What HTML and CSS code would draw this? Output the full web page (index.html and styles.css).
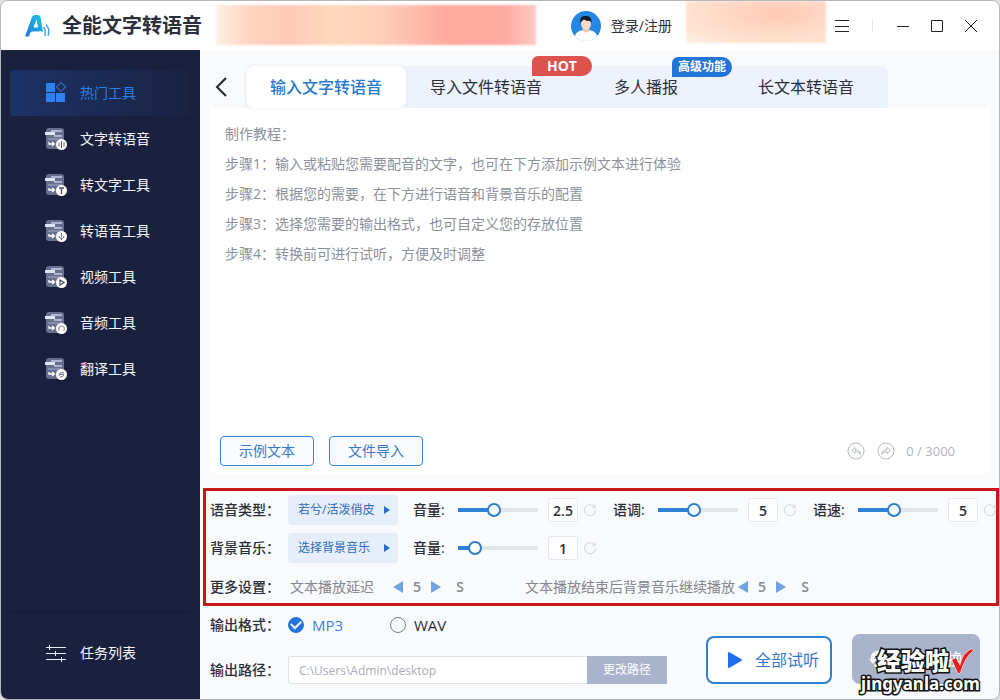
FILE: index.html
```html
<!DOCTYPE html>
<html lang="zh-CN">
<head>
<meta charset="utf-8">
<meta name="viewport" content="width=device-width, initial-scale=1">
<title>全能文字转语音</title>
<link rel="stylesheet" href="styles.css">
</head>
<body>
<svg class="defs" aria-hidden="true">
  <defs>
    <linearGradient id="logo-fill" x1="1" y1="0" x2="0" y2="1">
      <stop offset="0" stop-color="#22c6e8"/><stop offset="1" stop-color="#1d74d8"/>
    </linearGradient>
    <symbol id="tool" viewBox="0 0 24 24">
      <rect x="2" y="1" width="18" height="21" rx="3" fill="#686f8e"/>
      <path d="M7 4h11M10 9h8" stroke="#aeb5d2" stroke-width="2" fill="none"/>
      <path d="M1 6.500h10" stroke="#dfe4f6" stroke-width="3"/>
      <path d="M4 12h14" stroke="#9299b6" stroke-width="1.500"/>
      <path d="M5 15v2h5M8 15l2.500 2L8 19" stroke="#fff" stroke-width="1.300" fill="none"/>
      <circle cx="17.500" cy="17.500" r="5.500" fill="#fff"/>
    </symbol>
    <symbol id="reset" viewBox="0 0 14 14">
      <path d="M11.500 4A5.500 5.500 0 1 0 12.500 7M12 1.500v3H9.500" fill="none" stroke="#dcdee2" stroke-width="1.300"/>
    </symbol>
  </defs>
</svg>

<div class="window">
  <header class="titlebar">
    <svg class="logo" viewBox="0 0 28 24" aria-hidden="true">
      <path fill="url(#logo-fill)" fill-rule="evenodd" d="M0 22.500 7 3Q8 1 10 1H13Q15 1 15.500 3L18 18 15.500 17 13.500 17.500H7Q5 18 4 22.500ZM8.500 13.500H13L11.500 5.500Z"/>
      <path d="M18.500 13q3 4 1 9M21 10.500q4.500 5.500 2 11.500" fill="none" stroke="#3aa7e4" stroke-width="1.400"/>
    </svg>
    <h1 class="title">全能文字转语音</h1>
    <div class="promo promo-wide"></div>
    <button class="login" type="button">
      <svg class="avatar" viewBox="0 0 30 30" aria-hidden="true">
        <circle cx="15" cy="15" r="15" fill="#2587e4"/>
        <path d="M4 25q1-5 8-6h6q7 1 8 6-4 5-11 5T4 25Z" fill="#fff"/>
        <path d="M12 16h6v4q-3 3-6 0Z" fill="#f1c6ad"/>
        <ellipse cx="15" cy="13" rx="5" ry="6" fill="#fbdac5"/>
        <path d="M9.500 12Q8 5 14 5q7-1 6.500 7l-1.500-2q-4 0-6-1.500-2 .5-3.500 3.500Z" fill="#151b2b"/>
      </svg>
      <span>登录/注册</span>
    </button>
    <div class="promo promo-small"></div>
    <div class="controls">
      <button class="control" type="button" aria-label="菜单"><svg viewBox="0 0 16 16"><path d="M1 2.500h14M1 8.500h14M1 13.500h14"/></svg></button>
      <span class="control-divider"></span>
      <button class="control" type="button" aria-label="最小化"><svg viewBox="0 0 16 16"><path d="M2 8.500h12"/></svg></button>
      <button class="control" type="button" aria-label="最大化"><svg viewBox="0 0 16 16"><path d="M2.500 2.500h11v11h-11z"/></svg></button>
      <button class="control" type="button" aria-label="关闭"><svg viewBox="0 0 16 16"><path d="m2 2 12 12M14 2 2 14"/></svg></button>
    </div>
  </header>

  <div class="body">
    <nav class="sidebar">
      <a class="nav-item active" href="#hot">
        <svg class="nav-icon" viewBox="0 0 24 24"><path d="M2 2h9v9H2zM2 12h9v9H2zM12 12h9v9h-9z" fill="#2f80f0"/><path d="m17 1.500 4.500 4.500L17 10.500 12.500 6z" fill="none" stroke="#3b66b0" stroke-width="1.200"/></svg>热门工具</a>
      <a class="nav-item" href="#tts">
        <svg class="nav-icon" viewBox="0 0 24 24"><use href="#tool"/><path d="M15 15.500v4M17.500 14v7M20 15.500v4" stroke="#555c78"/></svg>文字转语音</a>
      <a class="nav-item" href="#to-text">
        <svg class="nav-icon" viewBox="0 0 24 24"><use href="#tool"/><path d="M15 15h5M17.500 15v6" stroke="#444b68" stroke-width="1.300"/></svg>转文字工具</a>
      <a class="nav-item" href="#to-voice">
        <svg class="nav-icon" viewBox="0 0 24 24"><use href="#tool"/><path d="M17.500 14v4M15 17q0 2.500 2.500 2.500T20 17M17.500 19v2" fill="none" stroke="#666d88"/></svg>转语音工具</a>
      <a class="nav-item" href="#video">
        <svg class="nav-icon" viewBox="0 0 24 24"><use href="#tool"/><path d="m16 15 4 2.500-4 2.500z" fill="none" stroke="#444b68" stroke-width="1.200"/></svg>视频工具</a>
      <a class="nav-item" href="#audio">
        <svg class="nav-icon" viewBox="0 0 24 24"><use href="#tool"/><path d="M14.500 18q0-3 3-3t3 3M15 18v2M20 18v2" fill="none" stroke="#777e96"/></svg>音频工具</a>
      <a class="nav-item" href="#translate">
        <svg class="nav-icon" viewBox="0 0 24 24"><use href="#tool"/><path d="M15 19q0-4 4-4v2.500h-4M20 17q0 3-4 3" fill="none" stroke="#777e96"/></svg>翻译工具</a>
      <div class="nav-bottom">
        <a class="nav-item" href="#tasks">
          <svg class="nav-icon" viewBox="0 0 24 24"><path d="M2 6.500h20M2 12.500h20M2 18.500h20M5.500 4v5M11.500 10v5M17.500 16v5" stroke="#e8ebf5"/></svg>任务列表</a>
      </div>
    </nav>

    <main class="main">
      <div class="tabbar">
        <button class="back" type="button" aria-label="返回"><svg viewBox="0 0 12 22"><path d="M11 2 2 11l9 9"/></svg></button>
        <div class="tabs" role="tablist">
          <button class="tab selected" type="button" role="tab" aria-selected="true">输入文字转语音</button>
          <button class="tab" type="button" role="tab">导入文件转语音<span class="badge hot">HOT</span></button>
          <button class="tab" type="button" role="tab">多人播报<span class="badge pro">高级功能</span></button>
          <button class="tab" type="button" role="tab">长文本转语音</button>
        </div>
      </div>

      <section class="editor">
        <textarea class="editor-text" aria-label="配音文字" placeholder="制作教程：
步骤1：输入或粘贴您需要配音的文字，也可在下方添加示例文本进行体验
步骤2：根据您的需要，在下方进行语音和背景音乐的配置
步骤3：选择您需要的输出格式，也可自定义您的存放位置
步骤4：转换前可进行试听，方便及时调整"></textarea>
        <div class="editor-foot">
          <button class="outline" type="button">示例文本</button>
          <button class="outline" type="button">文件导入</button>
          <div class="history">
            <button class="round" type="button" aria-label="撤销"><svg viewBox="0 0 18 18"><circle cx="9" cy="9" r="8"/><path d="M8 5.500 4.500 8.500 8 11.500V9.500q3.500-.5 5.500 3Q13 7.500 8 7.500Z"/></svg></button>
            <button class="round" type="button" aria-label="重做"><svg viewBox="0 0 18 18"><circle cx="9" cy="9" r="8"/><path d="m10 5.500 3.500 3-3.500 3V9.500q-3.500-.5-5.500 3Q5 7.500 10 7.500Z"/></svg></button>
            <span class="count">0 / 3000</span>
          </div>
        </div>
      </section>

      <section class="settings">
        <div class="row">
          <span class="label">语音类型：</span>
          <button class="picker" type="button">若兮/活泼俏皮<i class="tri right small"></i></button>
          <div class="adjust">
            <label for="volume">音量:</label>
            <input class="slider" id="volume" type="range" min="0" max="100" value="44" style="--fill:44%">
            <input class="value" type="text" value="2.5" aria-label="音量数值">
            <button class="reset" type="button" aria-label="重置音量"><svg><use href="#reset"/></svg></button>
          </div>
          <div class="adjust">
            <label for="pitch">语调:</label>
            <input class="slider" id="pitch" type="range" min="0" max="100" value="44" style="--fill:44%">
            <input class="value" type="text" value="5" aria-label="语调数值">
            <button class="reset" type="button" aria-label="重置语调"><svg><use href="#reset"/></svg></button>
          </div>
          <div class="adjust">
            <label for="speed">语速:</label>
            <input class="slider" id="speed" type="range" min="0" max="100" value="44" style="--fill:44%">
            <input class="value" type="text" value="5" aria-label="语速数值">
            <button class="reset" type="button" aria-label="重置语速"><svg><use href="#reset"/></svg></button>
          </div>
        </div>
        <div class="row">
          <span class="label">背景音乐：</span>
          <button class="picker" type="button">选择背景音乐<i class="tri right small"></i></button>
          <div class="adjust">
            <label for="music">音量:</label>
            <input class="slider" id="music" type="range" min="0" max="100" value="15" style="--fill:15%">
            <input class="value" type="text" value="1" aria-label="背景音乐音量数值">
            <button class="reset" type="button" aria-label="重置背景音乐音量"><svg><use href="#reset"/></svg></button>
          </div>
        </div>
        <div class="row more">
          <span class="label">更多设置：</span>
          <span class="delay">文本播放延迟</span>
          <div class="stepper">
            <button type="button" aria-label="减少"><i class="tri left"></i></button><b>5</b><button type="button" aria-label="增加"><i class="tri right"></i></button><b class="unit">S</b>
          </div>
          <span class="after">文本播放结束后背景音乐继续播放</span>
          <div class="stepper tight">
            <button type="button" aria-label="减少"><i class="tri left"></i></button><b>5</b><button type="button" aria-label="增加"><i class="tri right"></i></button><b class="unit">S</b>
          </div>
        </div>
      </section>

      <section class="output">
        <div class="output-fields">
          <div class="output-row format">
            <span class="label">输出格式：</span>
            <label class="choice"><input type="radio" name="format" checked><span>MP3</span></label>
            <label class="choice"><input type="radio" name="format"><span>WAV</span></label>
          </div>
          <div class="output-row">
            <label class="label" for="path">输出路径：</label>
            <input class="path" id="path" type="text" value="C:\Users\Admin\desktop">
            <button class="change" type="button">更改路径</button>
          </div>
        </div>
        <div class="actions">
          <button class="listen" type="button"><svg viewBox="0 0 16 18"><path d="M2 2v14l12-7z"/></svg>全部试听</button>
          <div class="convert-wrap">
            <button class="convert" type="button"><svg viewBox="0 0 18 18"><path d="M14 3A7 7 0 0 0 2 9H0l4 5 4-5H5q1-5 9-6ZM4 15a7 7 0 0 0 12-6h2l-4-5-4 5h3q-1 5-9 6Z"/></svg>开始转换</button>
            <div class="mark">
              <div class="mark-top"><span>经验啦</span><svg viewBox="0 0 24 26"><path d="m2 12 4-2 4 8Q13 4 22 1l1 2Q15 8 10 25H8Z"/></svg></div>
              <div class="mark-url">jingyanla.com</div>
            </div>
          </div>
        </div>
      </section>
    </main>
  </div>
</div>
</body>
</html>
```
FILE: styles.css
```css
* { box-sizing: border-box; }

body {
  margin: 0;
  background: #dcdee2;
  color: #2b2f3a;
  font: 14px/20px "Open Sans", "Noto Sans CJK SC", sans-serif;
}

button, input, textarea { font: inherit; color: inherit; margin: 0; }
button { padding: 0; border: 0; background: none; white-space: nowrap; }
a { color: inherit; text-decoration: none; }
.defs { position: absolute; width: 0; height: 0; }

.window {
  display: flex;
  flex-direction: column;
  min-height: 100vh;
  border: 1px solid #b4b6ba;
  border-radius: 8px;
  background: #f9fafc;
  overflow: hidden;
}

/* Title bar */
.titlebar {
  display: flex;
  align-items: center;
  height: 49px;
  padding: 0 14px 0 24px;
  background: #fff;
}
.logo { width: 28px; height: 24px; flex: none; }
.title {
  margin: 0 14px 0 9px;
  font-size: 20px;
  line-height: 30px;
  font-weight: 700;
  white-space: nowrap;
}
.promo { align-self: flex-start; filter: blur(1px); }
.promo-wide {
  flex: 1;
  height: 40px;
  margin-top: 4px;
  background: linear-gradient(90deg, #fff0e6 0, #ffd5c1 10%, #ffc9b8 22%, #ffd8bd 38%, #ffcdba 52%, #ffa99f 72%, #ffaaa2 90%, #ffc9c3 100%);
}
.promo-small {
  width: 140px;
  height: 42px;
  margin-right: 8px;
  background: radial-gradient(ellipse at 65% 30%, #ffc8b5 0, #ffd8c6 40%, #ffe4d1 75%, #fff0e8 100%);
}
.login { display: flex; align-items: center; gap: 10px; margin: 0 14px 0 35px; }
.avatar { width: 30px; height: 30px; }
.controls { display: flex; align-items: center; }
.control { width: 16px; height: 16px; margin-right: 18px; }
.control:last-child { margin-right: 6px; }
.control svg { display: block; width: 16px; height: 16px; fill: none; stroke: #22242a; stroke-width: 1; }
.control-divider { width: 1px; height: 14px; margin: 0 22px 0 4px; background: #e6e7ea; }

/* Sidebar */
.body { display: flex; flex: 1; }
.sidebar {
  display: flex;
  flex-direction: column;
  flex: none;
  width: 199px;
  padding: 20px 10px 23px 9px;
  background: #1a213f;
  color: #f4f6fc;
}
.nav-item {
  display: flex;
  align-items: center;
  gap: 12px;
  height: 46px;
  padding-left: 34px;
  border-radius: 4px;
}
.nav-item.active { background: linear-gradient(90deg, #1c3266, #1a2342); color: #2f7de6; }
.nav-icon { width: 24px; height: 24px; fill: none; }
.nav-bottom { margin-top: auto; padding-top: 18px; border-top: 1px solid #131a36; }

/* Tabs */
.main { display: flex; flex-direction: column; flex: 1; min-width: 0; }
.tabbar { display: flex; align-items: center; padding: 16px 16px 0 15px; }
.back { width: 12px; height: 22px; margin-right: 18px; }
.back svg { display: block; width: 12px; height: 22px; fill: none; stroke: #22242a; stroke-width: 2; }
.tabs { display: flex; padding: 0 2px 0 1px; border-radius: 8px 8px 0 0; background: #eef2fc; }
.tab { position: relative; width: 160px; height: 42px; font-size: 16px; }
.tab.selected {
  border-radius: 8px;
  background: #fff;
  color: #2879d0;
  font-weight: 500;
  box-shadow: 0 0 3px #e4e9f4;
}
.badge {
  position: absolute;
  top: -10px;
  left: 126px;
  width: 60px;
  height: 20px;
  border-radius: 6px 10px 10px 0;
  color: #fff;
  font-size: 12px;
  line-height: 20px;
  font-weight: 700;
}
.hot { background: #dc524c; font-size: 14px; }
.pro { top: -9px; left: 106px; background: #2474d8; }

/* Editor */
.editor {
  display: flex;
  flex-direction: column;
  flex: 1;
  margin: 0 9px 14px 10px;
  padding: 11px 10px 8px;
  border-radius: 0 0 6px 6px;
  background: #fff;
}
.editor-text {
  flex: 1;
  min-height: 160px;
  padding: 0 5px;
  border: 0;
  outline: 0;
  resize: none;
  background: transparent;
  line-height: 30px;
}
.editor-text::placeholder { color: #8c919c; opacity: 1; }
.editor-foot { display: flex; align-items: center; gap: 15px; }
.outline {
  width: 94px;
  height: 30px;
  border: 1px solid #3b86cc;
  border-radius: 4px;
  background: #f8fbff;
  color: #3b78c4;
}
.history { display: flex; align-items: center; gap: 12px; margin-left: auto; padding-right: 25px; }
.round svg { display: block; width: 18px; height: 18px; fill: none; stroke: #b4bac4; stroke-width: 1; }
.count { margin-left: -1px; color: #b0b4bc; font-size: 13px; white-space: nowrap; }

/* Voice settings */
.settings {
  margin-left: 3px;
  padding: 0 0 0 4px;
  border: 3px solid #c8161d;
  overflow: hidden;
}
.row { display: flex; align-items: center; height: 38px; }
.row.more { height: 36px; padding-top: 4px; }
.label { flex: none; width: 78px; font-weight: 500; white-space: nowrap; }
.picker {
  display: flex;
  align-items: center;
  justify-content: space-between;
  flex: none;
  width: 110px;
  height: 30px;
  margin-right: 15px;
  padding: 0 8px 0 10px;
  border-radius: 4px;
  background: #e6eefb;
  color: #2b6cb8;
  font-size: 12px;
}
.adjust { display: flex; align-items: center; flex: none; width: 200px; }
.adjust label { width: 45px; font-weight: 500; }
.slider {
  appearance: none;
  width: 80px;
  height: 14px;
  background: linear-gradient(#2f80d4, #2f80d4) 0 5px / var(--fill) 4px no-repeat, linear-gradient(#e3e5ea, #e3e5ea) 0 5px / 100% 4px no-repeat;
}
.slider::-webkit-slider-thumb {
  appearance: none;
  width: 14px;
  height: 14px;
  border: 2px solid #2f7dcc;
  border-radius: 50%;
  background: #fff;
}
.value {
  width: 30px;
  height: 24px;
  margin: 0 5px 0 10px;
  padding: 0;
  border: 1px solid #e3e7ee;
  border-radius: 3px;
  background: #fff;
  font-weight: 600;
  text-align: center;
}
.reset, .reset svg { display: block; width: 14px; height: 14px; }
.tri { width: 0; height: 0; border: 6px solid transparent; }
.tri.left { border-left: 0; border-right: 10px solid #6fa3e2; }
.tri.right { border-right: 0; border-left: 10px solid #6fa3e2; }
.tri.small { border-width: 4px 0 4px 6px; border-left-color: #2b6cc4; }
.delay, .after { color: #82868f; white-space: nowrap; }
.delay { margin-left: 2px; }
.stepper { display: flex; align-items: center; margin-left: 19px; color: #858992; }
.stepper.tight { margin-left: 3px; }
.stepper button, .stepper i { display: block; }
.stepper b { width: 28px; font-weight: 600; text-align: center; }
.stepper .unit { margin-left: 5px; }
.after { margin-left: 51px; }

/* Output */
.output { display: flex; align-items: flex-end; justify-content: space-between; padding: 5px 19px 15px 10px; }
.output-row { display: flex; align-items: center; height: 28px; }
.output-row + .output-row { margin-top: 17px; }
.choice { display: flex; align-items: center; gap: 8px; width: 102px; font-size: 15px; }
.choice input {
  display: grid;
  place-items: center;
  appearance: none;
  width: 16px;
  height: 16px;
  border: 1px solid #777b84;
  border-radius: 50%;
}
.choice input:checked { border-color: #2074e0; background: #2074e0; }
.choice input:checked::after {
  content: "";
  width: 8px;
  height: 5px;
  margin-bottom: 3px;
  border: solid #fff;
  border-width: 0 0 2px 2px;
  transform: rotate(-45deg);
}
.choice input:checked + span { color: #3b7fd8; }
.path {
  width: 299px;
  height: 28px;
  padding: 0 10px;
  border: 1px solid #dfe3ea;
  border-right: 0;
  border-radius: 3px 0 0 3px;
  background: #fff;
  color: #a9adb8;
  font-size: 12px;
}
.change { width: 80px; height: 28px; background: #a9b3cb; color: #fff; font-size: 12px; }
.actions { display: flex; align-items: flex-end; gap: 20px; }
.listen, .convert { display: flex; align-items: center; justify-content: center; gap: 12px; border-radius: 8px; font-size: 16px; }
.listen { width: 126px; height: 48px; padding-left: 8px; border: 2px solid #2f7fd0; background: #fff; color: #3378c8; }
.listen svg { width: 16px; height: 18px; fill: #1f6fec; stroke: #1f6fec; stroke-width: 2; stroke-linejoin: round; }
.convert-wrap { position: relative; }
.convert { width: 128px; height: 50px; background: #a9b3cb; color: #fff; }
.convert svg { width: 18px; height: 18px; fill: #fff; }

.mark {
  position: absolute;
  top: 13px;
  left: 9px;
  color: #fff;
  font-weight: 700;
  white-space: nowrap;
  -webkit-text-stroke: 3px #111;
  paint-order: stroke fill;
}
.mark-top { display: flex; align-items: center; height: 27px; padding-left: 16px; font-size: 24px; font-weight: 900; }
.mark-top svg { width: 26px; height: 26px; fill: #ee1c1c; stroke: #fff; stroke-width: 1; }
.mark-url { font: 700 17px/20px "Noto Sans", sans-serif; }
```
